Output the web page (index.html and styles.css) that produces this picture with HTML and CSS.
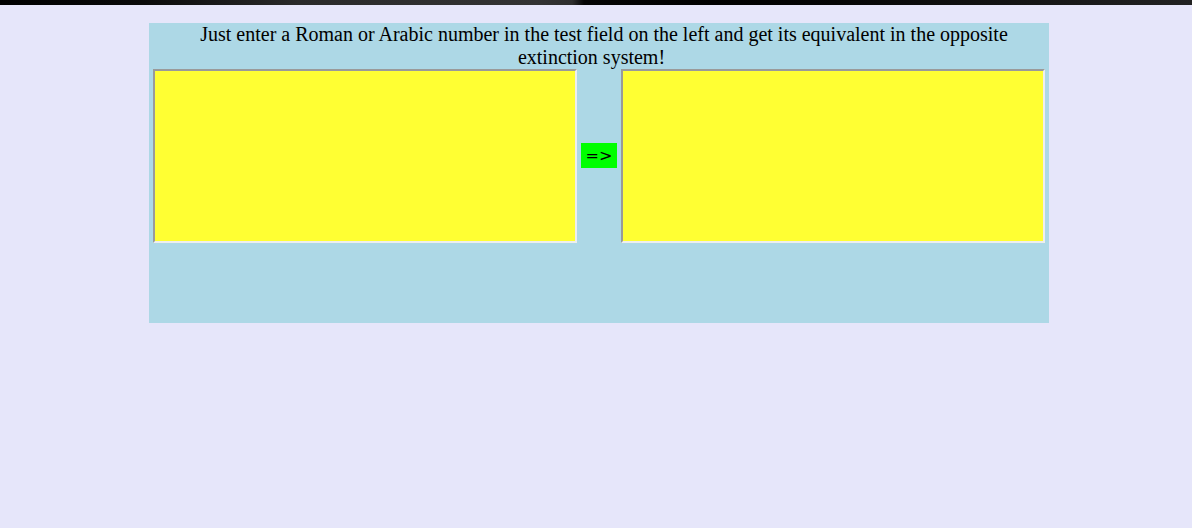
FILE: index.html
```html
<!DOCTYPE html>
<html>
<head>
<meta charset="utf-8">
<link rel="stylesheet" href="styles.css">
</head>
<body>
<div class="topbar"></div>
<div class="page">
  <div class="panel">
    <p class="intro">Just enter a Roman or Arabic number in the test field on the left and get its equivalent in the opposite extinction system!&nbsp;&nbsp;&nbsp;&nbsp;&nbsp;</p>
    <div class="row">
      <textarea class="field"></textarea>
      <button class="convert" type="button">=&gt;</button>
      <textarea class="field" readonly></textarea>
    </div>
  </div>
</div>
</body>
</html>
```

FILE: styles.css
```css
html, body {
  margin: 0;
  padding: 0;
  background: #e6e6fa;
  height: 100%;
}
body {
  font-family: "Liberation Serif", "Times New Roman", serif;
}
.topbar {
  height: 5px;
  background: linear-gradient(90deg, #000 0%, #0a0a0a 12%, #2a2a2a 25%, #333 45%, #2e2e2e 48%, #050505 49%, #000 60%, #050505 70%, #1e1e1e 95%, #222 100%);
}
.page {
  padding: 18px 0 0 149px;
}
.panel {
  width: 900px;
  height: 300px;
  background: #add8e6;
}
.intro {
  margin: 0;
  font-size: 20px;
  line-height: 23px;
  text-align: center;
  color: #000;
  padding: 0 25px 0 35px;
}
.row {
  display: flex;
  align-items: center;
  gap: 4px;
  padding: 0 4px;
}
.field {
  box-sizing: border-box;
  width: 424px;
  height: 174px;
  margin: 0;
  padding: 2px;
  background: #ffff33;
  border: 2px solid;
  border-color: #9a9a9a #eeeeee #eeeeee #9a9a9a;
  resize: none;
  outline: none;
  font-family: "Liberation Mono", monospace;
  font-size: 13px;
}
.convert {
  box-sizing: border-box;
  width: 36px;
  height: 25px;
  margin: -2px 0 0 0;
  padding: 0;
  border: none;
  background: #00ff00;
  color: #000;
  font-family: "DejaVu Sans", sans-serif;
  font-size: 16px;
}
```
